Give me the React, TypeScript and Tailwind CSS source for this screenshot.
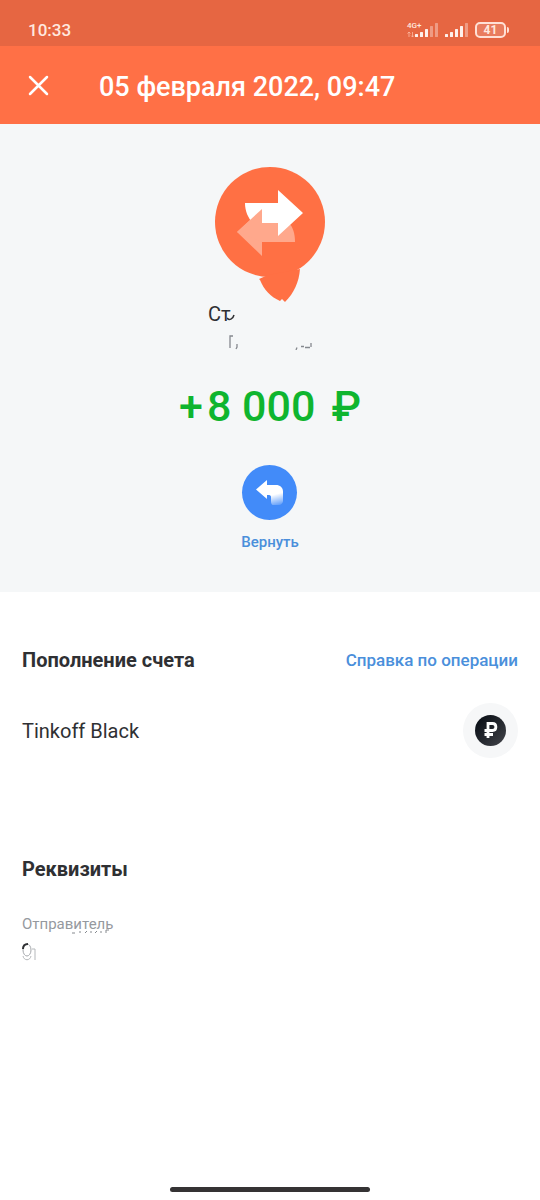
const signalBars = [
  { x: 0, y: 12, h: 3 },
  { x: 5, y: 10, h: 5 },
  { x: 10, y: 7, h: 8 },
  { x: 15, y: 4, h: 11 },
  { x: 20, y: 1, h: 14 },
];

function Signal({ strength }: { strength: number }) {
  return (
    <svg className="h-4 w-6" viewBox="0 0 24 16" fill="#fff" aria-hidden="true">
      {signalBars.map((bar, i) => (
        <rect
          key={bar.x}
          x={bar.x}
          y={bar.y}
          width="3"
          height={bar.h}
          rx="0.5"
          opacity={i < strength ? 0.9 : 0.35}
        />
      ))}
    </svg>
  );
}

function StatusBar() {
  return (
    <div className="flex h-[46px] items-end justify-between bg-[#e66642] pr-[31px] pb-1 pl-7 text-[#ffe8df]">
      <span className="text-[17px] leading-6 font-medium">10:33</span>
      <div className="flex items-center pb-1">
        <div className="flex w-2 flex-col text-[8px] leading-2 font-medium">
          <span className="whitespace-nowrap">4G+</span>
          <svg className="h-2 w-2" viewBox="0 0 8 8" aria-hidden="true">
            <path
              d="M2 7V2M0.500 3.500 2 2 3.500 3.500M5.500 2V7M4 5.500 5.500 7 7 5.500"
              fill="none"
              stroke="#ffc3ae"
              strokeWidth="0.700"
            />
          </svg>
        </div>
        <Signal strength={3} />
        <span className="w-1.5" />
        <Signal strength={4} />
        <div className="ml-1.5 flex items-center">
          <span className="flex h-4 w-[31px] items-center justify-center rounded-[5px] border-2 border-[#ffe0d5] bg-white/15 text-xs leading-3 font-bold">
            41
          </span>
          <span className="ml-px h-1.5 w-0.5 rounded-r bg-[#ffe0d5]" />
        </div>
      </div>
    </div>
  );
}

function TransferLogo() {
  return (
    <svg className="h-[136px] w-[110px]" viewBox="0 0 110 136" aria-hidden="true">
      <circle cx="55" cy="55" r="55" fill="#ff7044" />
      <path
        d="M44 112 53 108 85 102C84 115 79 126 70 135L67 132 65 134C56 130 49 123 45 113Z"
        fill="#ff7044"
      />
      <path d="M22 65 47 42V56H74C78 60 80 67 80 75H47V89Z" fill="#ffa88c" />
      <path d="M30 36H63V23L88 46 63 69V56H38C33 51 30 44 30 36Z" fill="#fff" />
      <path d="M22 65 47 42V75Z" fill="#ffa88c" />
    </svg>
  );
}

function BackIcon() {
  return (
    <svg className="h-[55px] w-[55px]" viewBox="0 0 55 55" aria-hidden="true">
      <defs>
        <linearGradient id="tail" x1="30" y1="25" x2="34" y2="41" gradientUnits="userSpaceOnUse">
          <stop offset="0.3" stopColor="#fff" />
          <stop offset="1" stopColor="#fff" stopOpacity="0.15" />
        </linearGradient>
      </defs>
      <path
        d="M14 24.500 25 15V20H34C38 20 41 22.500 41 26.500V36C41 38 39 40 37 40H31C29.500 40 29 38 29 36V32C29 30.500 28 30 26 30H25V34Z"
        fill="url(#tail)"
      />
    </svg>
  );
}

function RubleIcon() {
  return (
    <svg className="h-[31px] w-[31px]" viewBox="0 0 31 31" aria-hidden="true">
      <defs>
        <linearGradient id="coin" x1="4" y1="4" x2="27" y2="27" gradientUnits="userSpaceOnUse">
          <stop stopColor="#0c1118" />
          <stop offset="1" stopColor="#3b3d43" />
        </linearGradient>
      </defs>
      <circle cx="15.500" cy="15.500" r="15.500" fill="url(#coin)" />
      <path
        d="M13 23V8.500H17.500C22 8.500 22 15.500 17.500 15.500H9.500M9.500 19.500H18"
        fill="none"
        stroke="#fff"
        strokeWidth="2.800"
      />
    </svg>
  );
}

export default function App() {
  return (
    <div className="flex min-h-screen flex-col bg-white font-['Roboto',sans-serif] text-[#2f3033]">
      <StatusBar />
      <header className="flex h-[78px] items-center bg-[#ff7046] px-7 text-white">
        <button type="button" aria-label="Закрыть" className="pr-[50px]">
          <svg className="h-[21px] w-[21px]" viewBox="0 0 21 21" aria-hidden="true">
            <path d="M2 2 19 19M19 2 2 19" stroke="#fff" strokeWidth="2.500" strokeLinecap="round" />
          </svg>
        </button>
        <h1 className="pt-1 text-[27px] leading-8 font-medium">05 февраля 2022, 09:47</h1>
      </header>

      <main className="flex flex-1 flex-col">
        <section className="flex flex-col items-center bg-[#f5f7f8] pt-[43px] pb-10">
          <TransferLogo />
          {/* Sender name and category, mostly wiped out */}
          <div className="flex h-[22px] w-[124px] items-center text-xl leading-6">
            <span>Ст</span>
            <svg className="-ml-1 mt-1 h-3 w-2" viewBox="0 0 8 12" aria-hidden="true">
              <path d="M0 8C2 11 6 9 7 5" fill="none" stroke="#2f3033" strokeWidth="1.500" />
            </svg>
          </div>
          <svg className="mt-[9px] h-4 w-[86px]" viewBox="0 0 86 16" aria-hidden="true">
            <path
              d="M3 14V2H6M10 10V13L9 15M70 13.500 69 16M74 12.500H77M78 13.500H83M84 9V13"
              fill="none"
              stroke="#85898e"
              strokeWidth="1.300"
            />
          </svg>

          <p className="mt-8 flex h-12 items-center text-[43px] leading-[48px] font-medium text-[#0fb52f]">
            <span>+</span>
            <span className="ml-1">8 000</span>
            <span className="ml-4">₽</span>
          </p>

          <button type="button" className="mt-[35px] flex flex-col items-center gap-3">
            <span className="rounded-full bg-[#428bf9]">
              <BackIcon />
            </span>
            <span className="text-[15px] leading-5 font-medium text-[#4a8fdb]">Вернуть</span>
          </button>
        </section>

        <section className="px-[22px] pt-14">
          <div className="flex items-center justify-between">
            <h2 className="text-xl leading-6 font-bold">Пополнение счета</h2>
            <a href="#help" className="text-[17px] leading-6 font-medium text-[#4a8fdb]">
              Справка по операции
            </a>
          </div>
          <div className="mt-[31px] flex items-center justify-between">
            <span className="text-xl leading-6">Tinkoff Black</span>
            <span className="flex h-[55px] w-[55px] items-center justify-center rounded-full bg-[#f6f7f8]">
              <RubleIcon />
            </span>
          </div>
        </section>

        <section className="px-[22px] pt-[99px]">
          <h2 className="text-xl leading-6 font-bold">Реквизиты</h2>
          <p className="mt-[33px] text-[15px] leading-5 text-[#95999e]">Отправитель</p>
          <svg className="h-8 w-24 overflow-visible" viewBox="0 0 96 32" fill="none" aria-hidden="true">
            <path d="M50 -1H53M58 -1V-3M63 -1 65 -3M69 -1V-3M73 -1 75 -3M79 -1V-3M84 -1V-4H87" stroke="#85898e" />
            <ellipse cx="5" cy="16" rx="4" ry="6" stroke="#a5a8ac" />
            <path d="M1 22C2 27 8 27 9 22M10 15H13V26" stroke="#b5b8bb" />
            <path d="M1 15C1 12 3 10 6 10" stroke="#2f3033" strokeWidth="2" />
          </svg>
        </section>
      </main>

      <footer className="flex justify-center pb-2">
        <span className="h-[5px] w-[200px] rounded-full bg-[#353334]" />
      </footer>
    </div>
  );
}
